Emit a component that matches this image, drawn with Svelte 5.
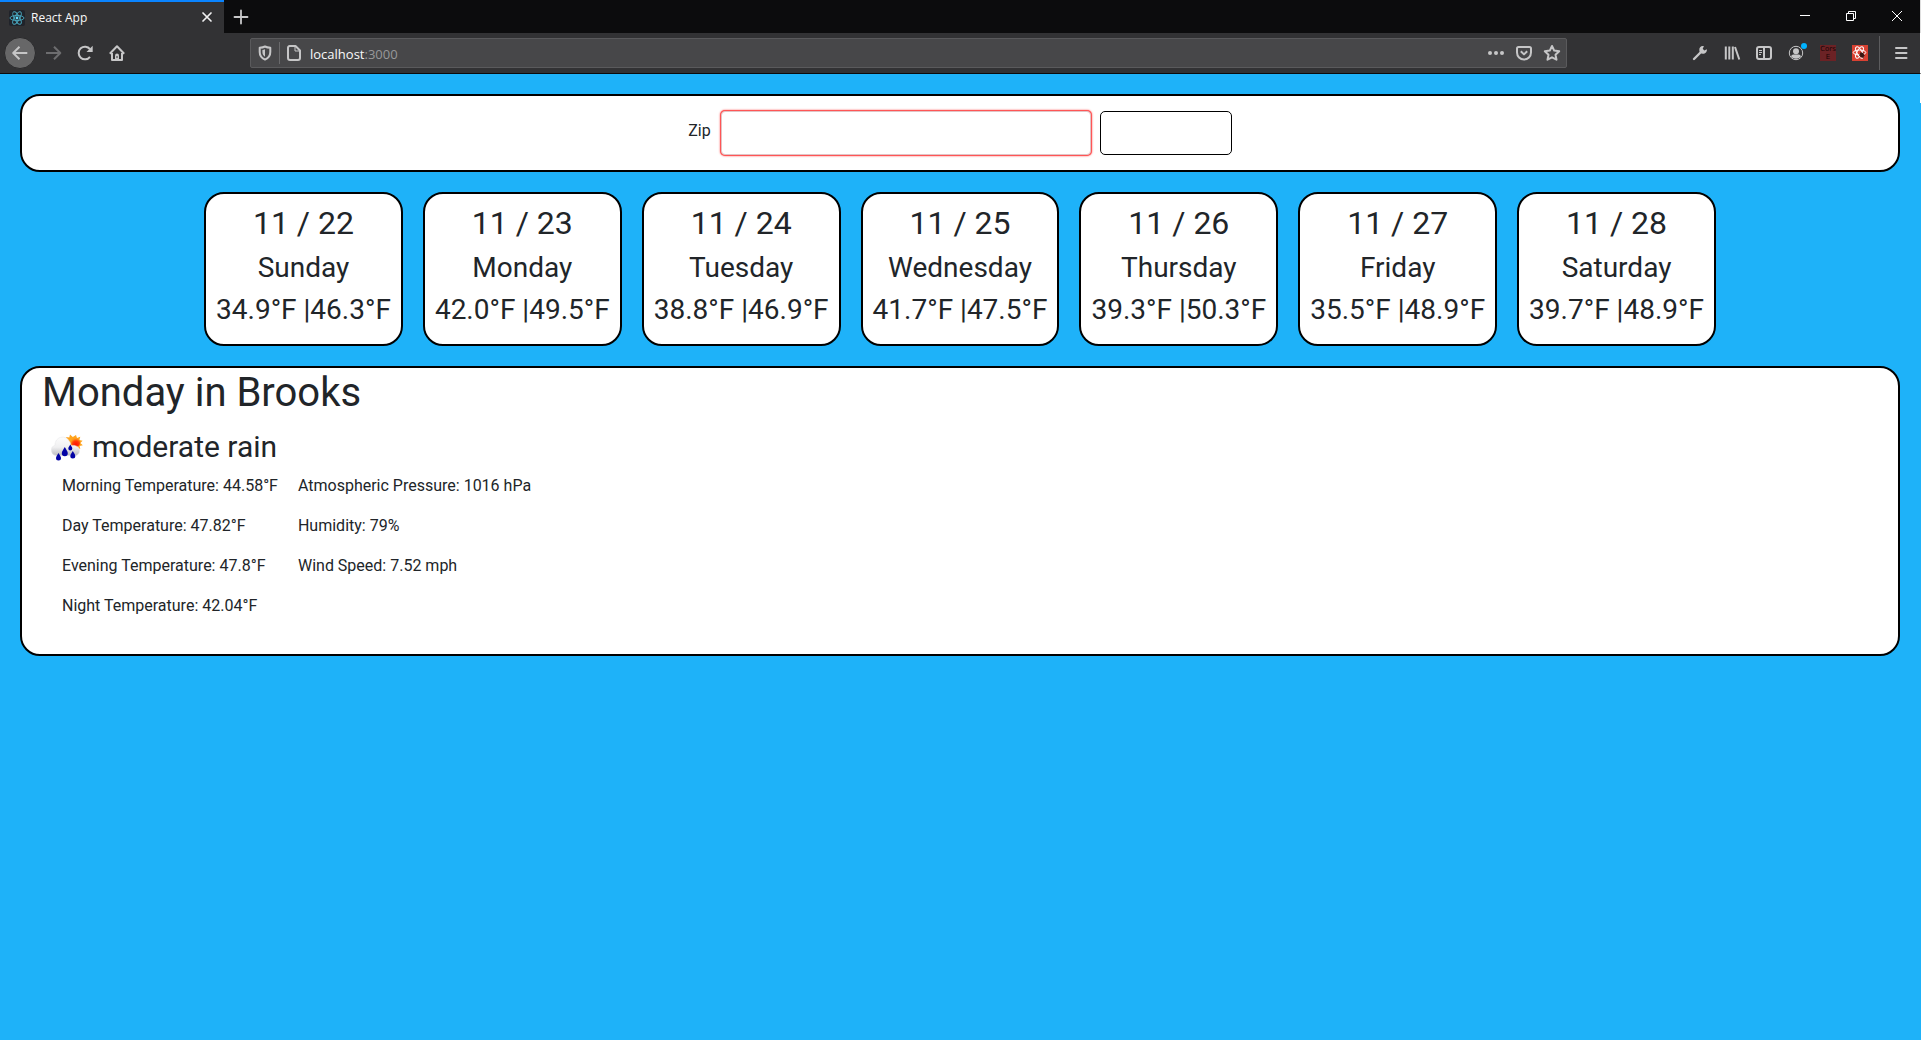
<script>
  const days = [
    { date: '11 / 22', name: 'Sunday', low: '34.9', high: '46.3' },
    { date: '11 / 23', name: 'Monday', low: '42.0', high: '49.5' },
    { date: '11 / 24', name: 'Tuesday', low: '38.8', high: '46.9' },
    { date: '11 / 25', name: 'Wednesday', low: '41.7', high: '47.5' },
    { date: '11 / 26', name: 'Thursday', low: '39.3', high: '50.3' },
    { date: '11 / 27', name: 'Friday', low: '35.5', high: '48.9' },
    { date: '11 / 28', name: 'Saturday', low: '39.7', high: '48.9' }
  ];
  const temperatures = [
    'Morning Temperature: 44.58°F',
    'Day Temperature: 47.82°F',
    'Evening Temperature: 47.8°F',
    'Night Temperature: 42.04°F'
  ];
  const conditions = ['Atmospheric Pressure: 1016 hPa', 'Humidity: 79%', 'Wind Speed: 7.52 mph'];
  let zip = $state('');
</script>

<div class="window">
  <header class="tabs">
    <div class="tab">
      <svg class="favicon" viewBox="0 0 16 16" width="16" height="16" aria-hidden="true">
        <rect width="16" height="16" rx="2" fill="#20232a" />
        <g fill="none" stroke="#4aa9c0" stroke-width=".9">
          <ellipse cx="8" cy="8" rx="7" ry="2.6" />
          <ellipse cx="8" cy="8" rx="7" ry="2.6" transform="rotate(60 8 8)" />
          <ellipse cx="8" cy="8" rx="7" ry="2.6" transform="rotate(120 8 8)" />
        </g>
        <circle cx="8" cy="8" r="1.4" fill="#61dafb" />
      </svg>
      <span class="title">React App</span>
      <button class="close" aria-label="Close tab">
        <svg viewBox="0 0 10 10" width="10" height="10"><path d="M1 1l8 8M9 1L1 9" stroke="#f0f0f1" stroke-width="1.7" stroke-linecap="round" /></svg>
      </button>
    </div>
    <button class="new" aria-label="New tab">
      <svg viewBox="0 0 14 14" width="14" height="14"><path d="M7 .5v13M.5 7h13" stroke="#c8c8c9" stroke-width="1.8" stroke-linecap="round" /></svg>
    </button>
    <div class="controls">
      <button aria-label="Minimize"><svg viewBox="0 0 10 10" width="10" height="10"><path d="M0 4.500h10" stroke="#fff" /></svg></button>
      <button aria-label="Restore"><svg viewBox="0 0 10 10" width="10" height="10"><path d="M.5 2.500h7v7h-7zM2.500 2.500v-2h7v7h-2" fill="none" stroke="#fff" /></svg></button>
      <button aria-label="Close"><svg viewBox="0 0 10 10" width="10" height="10"><path d="M0 0l10 10M10 0L0 10" stroke="#fff" /></svg></button>
    </div>
  </header>

  <nav class="toolbar" aria-label="Browser">
    <button class="tool back" aria-label="Back">
      <svg viewBox="0 0 16 16"><path d="M15.300 8H1.500M7.500 1.700L1.200 8l6.300 6.300" class="line" /></svg>
    </button>
    <button class="tool dim" aria-label="Forward">
      <svg viewBox="0 0 16 16"><path d="M1 8h14M9 1.700L15.300 8 9 14.300" class="line" /></svg>
    </button>
    <button class="tool" aria-label="Reload">
      <svg viewBox="0 0 16 16"><path d="M13 11.800A6.300 6.300 0 1 1 13 4.200" class="line" /><path d="M15.700.8v6.200H9.500z" class="fill" /></svg>
    </button>
    <button class="tool" aria-label="Home">
      <svg viewBox="0 0 16 16"><path d="M.8 8.700L8 1.300l7.200 7.400M3 8v7h10V8" class="line" /><path d="M6 15.500v-5q0-2 2-2t2 2v5z" class="fill" /><path d="M7.500 11h1v2h-1z" fill="#323234" /></svg>
    </button>
    <div class="address">
      <svg class="shield" viewBox="0 0 14 16" width="14" height="16"><path d="M7 1.500c1.700.8 3.500 1.100 5.300 1.200V7c0 3.500-2 6.200-5.300 7.600C3.700 13.200 1.700 10.500 1.700 7V2.700C3.500 2.600 5.300 2.300 7 1.500z" class="line" /><path d="M7 4.300v7.500C5.300 10.700 4.400 9 4.400 7V4.900C5.300 4.800 6.200 4.600 7 4.300z" class="fill" /></svg>
      <span class="split"></span>
      <svg class="page" viewBox="0 0 16 16" width="16" height="16"><path d="M3.800 1h5.700L14 5.500V13a2 2 0 0 1-2 2H4a2 2 0 0 1-2-2V3a2 2 0 0 1 1.800-2z" class="line" /><path d="M9 1.200V6h4.800" class="line thin" /></svg>
      <span class="url">localhost<span>:3000</span></span>
      <button class="inner" aria-label="Page actions"><svg viewBox="0 0 16 16" width="16" height="16"><circle cx="2" cy="8" r="2" class="fill" /><circle cx="8" cy="8" r="2" class="fill" /><circle cx="14" cy="8" r="2" class="fill" /></svg></button>
      <button class="inner" aria-label="Save to Pocket"><svg viewBox="0 0 16 16" width="16" height="16"><path d="M2.500 2h11A1.500 1.500 0 0 1 15 3.500v4a7 7 0 0 1-14 0v-4A1.500 1.500 0 0 1 2.500 2z" class="line" /><path d="M4.800 6.300L8 9.400l3.200-3.100" class="line" /></svg></button>
      <button class="inner" aria-label="Bookmark"><svg viewBox="0 0 16 16" width="16" height="16"><path d="M8 1l2.200 4.600 5 .7-3.700 3.400 1 5L8 12.300l-4.500 2.400 1-5L.8 6.300l5-.7z" class="line" /></svg></button>
    </div>
    <button class="tool" aria-label="Developer tools">
      <svg viewBox="0 0 16 16"><path d="M2 14l6.500-6.500" stroke="#c6c6c7" stroke-width="2.400" stroke-linecap="round" /><path d="M14.800 4.200l-2.500 1.200-1.600-1.600 1.200-2.500C9.300.5 7 2.500 7.300 5.300c.1 2 1.600 3.400 3.500 3.400 2.600 0 4.500-2 4-4.500z" class="fill" /></svg>
    </button>
    <button class="tool" aria-label="Library">
      <svg viewBox="0 0 16 16"><path d="M1.800 1.500v13M5.300 1.500v13M8.800 1.500v13M11 2l4.300 12.500" class="line" /></svg>
    </button>
    <button class="tool" aria-label="Sidebar">
      <svg viewBox="0 0 16 16"><rect x="1" y="2" width="14" height="12" rx="2" class="line" /><path d="M8 2v12" class="line" /><path d="M3 5.500h3M3 7.500h3M3 9.500h2" class="line thin" /></svg>
    </button>
    <button class="tool account" aria-label="Account">
      <svg viewBox="0 0 16 16"><circle cx="8" cy="8" r="6.700" class="line thin" /><circle cx="8" cy="6.300" r="3" class="fill" /><path d="M3 11.300c.8-1.600 2-1.800 3-1.800h4c1 0 2.200.2 3 1.800-1 1.500-2.800 2.500-5 2.500s-4-1-5-2.500z" class="fill" /></svg>
      <span class="dot"></span>
    </button>
    <button class="tool" aria-label="CORS Everywhere"><span class="cors">Cors<br />E</span></button>
    <button class="tool" aria-label="React Developer Tools">
      <svg viewBox="0 0 16 16"><rect width="16" height="16" fill="#d84132" /><g fill="none" stroke="#fff" stroke-width="1"><ellipse cx="7.500" cy="7.500" rx="6.300" ry="2.500" /><ellipse cx="7.500" cy="7.500" rx="6.300" ry="2.500" transform="rotate(60 7.500 7.500)" /><ellipse cx="7.500" cy="7.500" rx="6.300" ry="2.500" transform="rotate(120 7.500 7.500)" /></g><ellipse cx="10" cy="10" rx="2" ry="2.700" transform="rotate(-40 10 10)" fill="#3a1512" /><path d="M7 10l5 3M8.500 7.500l4 3M8 12.500l3.500-5" stroke="#3a1512" stroke-width=".8" /></svg>
    </button>
    <span class="divider"></span>
    <button class="tool" aria-label="Menu">
      <svg viewBox="0 0 16 16"><path d="M3 3h10.500M3 8h10.500M3 13h10.500" class="line" stroke-linecap="round" /></svg>
    </button>
  </nav>

  <main>
    <form class="panel search" onsubmit={(e) => e.preventDefault()}>
      <label for="zip">Zip</label>
      <input id="zip" type="text" bind:value={zip} />
      <button class="submit" aria-label="Submit"></button>
    </form>

    <section class="week">
      {#each days as day}
        <article class="panel day">
          <h2>{day.date}</h2>
          <h3>{day.name}</h3>
          <h3>{day.low}°F |{day.high}°F</h3>
        </article>
      {/each}
    </section>

    <section class="panel detail">
      <h1>Monday in Brooks</h1>
      <div class="summary">
        <svg class="weather" viewBox="0 0 36 32" width="36" height="32" aria-hidden="true">
          <defs>
            <linearGradient id="cloud" x1="0" y1="0" x2="0" y2="1">
              <stop offset="0" stop-color="#fdfdfd" />
              <stop offset=".55" stop-color="#f0f0f1" />
              <stop offset="1" stop-color="#bcbcc0" />
            </linearGradient>
            <radialGradient id="sun" cx=".55" cy=".7" r=".6">
              <stop offset="0" stop-color="#ff1200" />
              <stop offset=".6" stop-color="#ff3b0a" />
              <stop offset="1" stop-color="#ff9a1a" />
            </radialGradient>
          </defs>
          <path d="M28 2l1 3 3.300-1.300-1 3.200 3.300.8-2.300 2.300 2.500 2.300-3.200.6.700 3.100-3.300-.9-2 2-7-6-.5-4.500-1.700-2.500 3.500.5.700-3 2.800 2.400z" fill="#ffa51e" />
          <circle cx="27.500" cy="9.500" r="4.700" fill="url(#sun)" />
          <path d="M8.300 22.500a5.300 5.300 0 0 1-1.300-10.300A7.600 7.600 0 0 1 21.500 8.500c1 1.500 1.300 3 1.200 4.200 3-.6 5.600-.2 7.500 1.600 2.300 2.600 1.500 7-1.800 8.200z" fill="url(#cloud)" stroke="#e4e4e6" stroke-width=".5" />
          <g fill="#0303a5">
            <path d="M16.800 14c1.400 2.800 3 4.200 3 6.200a3 3 0 0 1-6 0c0-2 1.600-3.400 3-6.200z" />
            <path d="M22.300 11.500c1 1.800 2 2.700 2 3.900a2 2 0 0 1-4 0c0-1.200 1-2.100 2-3.900z" />
            <path d="M24.800 18c1.200 2.400 2.500 3.500 2.500 5a2.500 2.500 0 0 1-5 0c0-1.500 1.300-2.600 2.500-5z" />
            <path d="M10.500 20c1.200 2.400 2.500 3.500 2.500 5a2.500 2.500 0 0 1-5 0c0-1.500 1.300-2.600 2.500-5z" />
          </g>
        </svg>
        <h3>moderate rain</h3>
      </div>
      <div class="facts">
        <div>{#each temperatures as line}<p>{line}</p>{/each}</div>
        <div>{#each conditions as line}<p>{line}</p>{/each}</div>
      </div>
    </section>
  </main>
</div>

<style>
  :global(body) { margin: 0; background: #1eb2f9; }
  .window {
    min-height: 100vh;
    color: #212529;
    font: 16px/24px Roboto, "Liberation Sans", sans-serif;
  }
  button { border: 0; padding: 0; background: none; color: inherit; font: inherit; }
  svg { display: block; overflow: visible; }
  h1, h2, h3, p { margin: 0; font-weight: 400; }

  .tabs { display: flex; height: 33px; border-right: 1px solid #dfdfdf; background: #0c0c0d; }
  .tab {
    box-sizing: border-box;
    display: flex;
    align-items: center;
    width: 224px;
    padding: 0 12px 0 9px;
    border-top: 2px solid #0a84ff;
    background: #323234;
    color: #f9f9fa;
  }
  .title { flex: 1; margin-left: 6px; font: 12px/16px "Open Sans", "Noto Sans", sans-serif; }
  .close { padding-bottom: 1px; }
  .new { width: 34px; display: grid; place-items: center; }
  .controls { display: flex; margin-left: auto; }
  .controls button { width: 46px; display: grid; place-items: center; padding-bottom: 1px; }

  .toolbar {
    display: flex;
    align-items: center;
    height: 40px;
    padding: 0 3px 0 4px;
    border-right: 1px solid #fff;
    border-bottom: 1px solid #0c0c0d;
    background: #323234;
  }
  .tool { position: relative; flex: none; display: grid; place-items: center; width: 32px; height: 32px; }
  .tool svg { width: 16px; height: 16px; }
  .back { box-sizing: border-box; margin-right: 1px; border: 1px solid #2a2a2c; border-radius: 50%; background: #676768; }
  .dim { opacity: .4; }
  .line { fill: none; stroke: #c6c6c7; stroke-width: 2; stroke-linejoin: round; }
  .thin { stroke-width: 1; }
  .fill { fill: #c6c6c7; }
  .address {
    box-sizing: border-box;
    flex: 1;
    display: flex;
    align-items: center;
    height: 30px;
    margin: 0 117px;
    padding: 0 0 0 7px;
    border: 1px solid #5a5a5c;
    border-radius: 2px;
    background: #474749;
  }
  .split { width: 1px; height: 22px; margin: 0 6px 0 7px; background: #6a6a6c; }
  .url { flex: 1; margin-left: 8px; padding-top: 2px; color: #f9f9fa; font: 13px/20px "Open Sans", "Noto Sans", sans-serif; }
  .url span { color: #98989a; }
  .inner { width: 28px; height: 28px; display: grid; place-items: center; }
  .dot { position: absolute; top: 6px; right: 5px; width: 6px; height: 6px; border-radius: 50%; background: #00b3ff; }
  .cors { width: 16px; height: 16px; background: #6b2225; color: #180506; font: 7px/8px "DejaVu Sans", sans-serif; text-align: center; }
  .divider { width: 1px; height: 34px; margin: 0 5px 0 3px; background: #5c5c5e; }

  main {
    display: flex;
    flex-direction: column;
    gap: 20px;
    padding: 20px 21px 20px 20px;
    background: linear-gradient(#fff, #fff) right top / 1px 29px no-repeat;
  }
  .panel { box-sizing: border-box; border: 2px solid #000; border-radius: 20px; background: #fff; }
  .search { display: flex; justify-content: center; padding: 15px 10px; }
  .search label { margin: 8px 10px 0 0; }
  #zip {
    box-sizing: border-box;
    width: 370px;
    height: 44px;
    padding: 0 8px;
    border: 1px solid #e0c4c6;
    border-radius: 4px;
    outline: 0;
    font: inherit;
    box-shadow: 0 0 0 1px #ff5555, 0 0 2px 1px #ff5555;
  }
  .submit { box-sizing: border-box; width: 132px; height: 44px; margin-left: 9px; border: 1px solid #000; border-radius: 5px; background: #fff; }

  .week { display: flex; justify-content: center; gap: 20px; }
  .day { padding: 10px 10px 9px; text-align: center; white-space: nowrap; }
  h1 { font-size: 40px; line-height: 50px; }
  h2 { margin-bottom: 9px; font-size: 32px; line-height: 38px; }
  h3 { font-size: 28px; line-height: 34px; }
  .day h3 { margin-bottom: 8px; }

  .detail { padding: 0 20px 20px; }
  .summary { display: flex; align-items: center; gap: 8px; margin: 11px 0 9px 6px; }
  .summary h3 { font-size: 30px; line-height: 36px; }
  .weather { margin-top: 4px; }
  .facts { display: flex; gap: 20px; padding-left: 20px; }
  .facts p { margin-bottom: 16px; }
</style>
